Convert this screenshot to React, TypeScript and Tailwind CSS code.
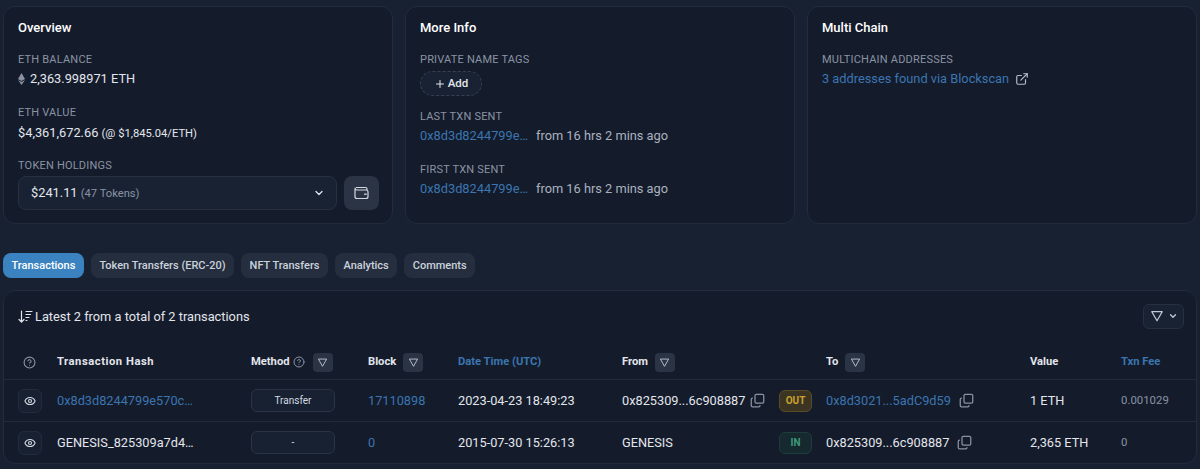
import { ChevronDown, Copy, ExternalLink, Eye, Plus, CircleHelp } from "lucide-react";

function Funnel({ size = 12 }: { size?: number }) {
  return (
    <svg width={size} height={size} viewBox="0 0 16 16" fill="none" stroke="currentColor" strokeWidth="1.3" strokeLinejoin="round">
      <path d="M2 3h12L8 13.5z" />
    </svg>
  );
}

function WalletIcon() {
  return (
    <svg width="15" height="14" viewBox="0 0 15 14" fill="none" stroke="currentColor" strokeWidth="1.2" strokeLinecap="round" strokeLinejoin="round">
      <path d="M2.500 1.500h9a1.500 1.500 0 0 1 1.500 1.500v1M1 3.500v7A2 2 0 0 0 3 12.500h9a2 2 0 0 0 2-2v-4.500a2 2 0 0 0-2-2H3a2 2 0 0 1-2-2" />
      <path d="M10.500 8.200h1.800" />
    </svg>
  );
}

function FilterButton() {
  return (
    <span className="flex h-[19px] w-5 items-center justify-center rounded-[4px] bg-[#2a3444] text-[#c3cad5]">
      <Funnel size={11} />
    </span>
  );
}

function Label({ children }: { children: string }) {
  return <div className="text-[11px] leading-[18px] tracking-[0.2px] text-[#8a93a3]">{children}</div>;
}

function Card({ title, children }: { title: string; children: React.ReactNode }) {
  return (
    <div className="h-[218px] w-[390px] rounded-xl border border-[#222c3c] bg-[#141b2b] px-[14px] pt-[11px]">
      <div className="text-[13px] font-medium leading-5 text-white">{title}</div>
      {children}
    </div>
  );
}

function CopyIcon() {
  return <Copy size={15} className="-scale-y-100 text-[#8a93a3]" />;
}

function Tab({ label, active }: { label: string; active?: boolean }) {
  return (
    <div
      className={
        active
          ? "flex h-[25px] items-center rounded-lg bg-[#3b82c0] px-[8.5px] pt-[1px] text-[11px] font-medium text-white"
          : "flex h-[25px] items-center rounded-lg bg-[#252e3e] px-[8.5px] pt-[1px] text-[11px] font-medium text-[#ccd2dc]"
      }
    >
      {label}
    </div>
  );
}

function TxnRow({
  hash,
  hashLink,
  method,
  block,
  date,
  from,
  fromCopy,
  dir,
  to,
  toLink,
  value,
  fee,
  last,
}: {
  hash: string;
  hashLink?: boolean;
  method: string;
  block: string;
  date: string;
  from: string;
  fromCopy?: boolean;
  dir: "OUT" | "IN";
  to: string;
  toLink?: boolean;
  value: string;
  fee: string;
  last?: boolean;
}) {
  return (
    <div className={last ? "flex h-[41px] items-center text-[12.75px]" : "flex h-[42px] items-center border-b border-[#222c3c] text-[12.75px]"}>
      <div className="w-[53px] pl-[14px]">
        <span className="flex h-6 w-6 items-center justify-center rounded-md border border-[#222c3c] bg-[#182132] text-[#d5dae2]">
          <Eye size={12} strokeWidth={2.2} />
        </span>
      </div>
      <div className={hashLink ? "w-[194px] text-[#3b76b0]" : "w-[194px] text-[#e3e6ec]"}>{hash}</div>
      <div className="w-[117px]">
        <span className="flex h-[23px] w-[84px] items-center justify-center rounded-md border border-[#2a3444] bg-[#182132] text-[10px] text-[#d5dae2]">
          {method}
        </span>
      </div>
      <div className="w-[90px] text-[#3b76b0]">{block}</div>
      <div className="w-[164px] text-[#e3e6ec]">{date}</div>
      <div className="flex w-[157px] items-center gap-[5px] text-[#e3e6ec]">
        {from}
        {fromCopy && <CopyIcon />}
      </div>
      <div className="w-[47px]">
        <span
          className={
            dir === "OUT"
              ? "flex h-[22px] w-[33px] items-center justify-center rounded-md border border-[#5a4c26] bg-[#3b3422] text-[10px] font-bold text-[#c9a22f]"
              : "flex h-[22px] w-[33px] items-center justify-center rounded-md border border-[#1f3c3c] bg-[#15292e] text-[10px] font-bold text-[#3f9a7d]"
          }
        >
          {dir}
        </span>
      </div>
      <div className={toLink ? "flex w-[204px] items-center gap-[8px] text-[#3b76b0]" : "flex w-[204px] items-center gap-[8px] text-[#e3e6ec]"}>
        {to}
        <CopyIcon />
      </div>
      <div className="w-[91px] text-[#e3e6ec]">{value}</div>
      <div className="text-[11.4px] text-[#8a93a3]">{fee}</div>
    </div>
  );
}

export default function App() {
  return (
    <div className="h-[469px] w-[1200px] overflow-hidden bg-[#172131] pt-[6px] font-['Roboto',sans-serif]">
      <div className="flex gap-3 px-[3px]">
        <Card title="Overview">
          <div className="mt-[13px]">
            <Label>ETH BALANCE</Label>
            <div className="flex items-center gap-[5px] text-[12.8px] leading-5 text-[#e3e6ec]">
              <svg width="7" height="12" viewBox="0 0 7 12" fill="#8a93a3">
                <path d="M3.500 0L7 6 3.500 8 0 6zM0 7l3.500 2L7 7l-3.500 5z" />
              </svg>
              2,363.998971 ETH
            </div>
          </div>
          <div className="mt-[15px]">
            <Label>ETH VALUE</Label>
            <div className="mt-[1px] text-[12.8px] leading-5 text-[#e3e6ec]">
              $4,361,672.66 <span className="text-[11.2px]">(@ $1,845.04/ETH)</span>
            </div>
          </div>
          <div className="mt-[13px]">
            <Label>TOKEN HOLDINGS</Label>
            <div className="mt-[1px] flex gap-[7px]">
              <div className="flex h-[34px] w-[319px] shrink-0 items-center justify-between rounded-lg border border-[#263041] bg-[#182233] pl-3 pr-[11px]">
                <span className="text-[12.8px] text-[#e3e6ec]">
                  $241.11 <span className="text-[11.2px] text-[#8a93a3]">(47 Tokens)</span>
                </span>
                <ChevronDown size={12} strokeWidth={2.5} className="text-[#e3e6ec]" />
              </div>
              <div className="flex h-[34px] w-[35px] shrink-0 items-center justify-center rounded-lg bg-[#2a3444] text-[#d5dae2]">
                <WalletIcon />
              </div>
            </div>
          </div>
        </Card>
        <Card title="More Info">
          <div className="mt-[13px]">
            <Label>PRIVATE NAME TAGS</Label>
            <div className="mt-[2px] flex h-[25px] w-[62px] items-center justify-center gap-[2px] rounded-full border border-dashed border-[#344054] bg-[#182233] text-[11.5px] font-medium text-[#e3e6ec]">
              <Plus size={12} />
              Add
            </div>
          </div>
          <div className="mt-[12px]">
            <Label>LAST TXN SENT</Label>
            <div className="flex text-[12.8px] leading-5">
              <span className="w-[116px] text-[#3b76b0]">0x8d3d8244799e…</span>
              <span className="text-[#aab2bf]">from 16 hrs 2 mins ago</span>
            </div>
          </div>
          <div className="mt-[15px]">
            <Label>FIRST TXN SENT</Label>
            <div className="flex text-[12.8px] leading-5">
              <span className="w-[116px] text-[#3b76b0]">0x8d3d8244799e…</span>
              <span className="text-[#aab2bf]">from 16 hrs 2 mins ago</span>
            </div>
          </div>
        </Card>
        <Card title="Multi Chain">
          <div className="mt-[13px]">
            <Label>MULTICHAIN ADDRESSES</Label>
            <div className="flex items-center gap-[6px] text-[12.8px] leading-5 text-[#3b76b0]">
              3 addresses found via Blockscan
              <ExternalLink size={14} className="text-[#b4bbc7]" />
            </div>
          </div>
        </Card>
      </div>

      <div className="mt-[29px] flex gap-[7px] pl-[3px]">
        <Tab label="Transactions" active />
        <Tab label="Token Transfers (ERC-20)" />
        <Tab label="NFT Transfers" />
        <Tab label="Analytics" />
        <Tab label="Comments" />
      </div>

      <div className="ml-[3px] mt-[12px] h-[174px] w-[1194px] rounded-xl border border-[#222c3c] bg-[#141b2b]">
        <div className="flex h-[50px] items-center justify-between pl-[14px] pr-[12px]">
          <div className="flex items-center gap-[2px] pt-[1px] text-[12.8px] text-[#e3e6ec]">
            <svg width="15" height="13" viewBox="0 0 15 13" fill="none" stroke="currentColor" strokeWidth="1.2" strokeLinecap="round" strokeLinejoin="round">
              <path d="M3.500 1v11M1 9.500L3.500 12 6 9.500M8 1.500h6M8 4.500h4.500M8 7.500h3M8 10.500h1" />
            </svg>
            Latest 2 from a total of 2 transactions
          </div>
          <div className="flex h-[25px] w-[41px] items-center justify-center gap-[4px] rounded-md border border-[#263041] bg-[#182233] text-[#c3cad5]">
            <Funnel size={14} />
            <ChevronDown size={10} strokeWidth={3} />
          </div>
        </div>
        <div className="flex h-[39px] items-center border-b border-[#222c3c] pt-[4px] text-[11.2px] font-bold text-[#e3e6ec]">
          <div className="w-[53px] pl-[19px] text-[#8a93a3]">
            <CircleHelp size={13} />
          </div>
          <div className="w-[194px] tracking-[0.55px]">Transaction Hash</div>
          <div className="flex w-[117px] items-center gap-[3px]">
            Method
            <CircleHelp size={12} className="text-[#8a93a3]" />
            <span className="ml-[5px]">
              <FilterButton />
            </span>
          </div>
          <div className="flex w-[90px] items-center gap-[7px]">
            Block
            <FilterButton />
          </div>
          <div className="w-[164px] text-[#3b76b0]">Date Time (UTC)</div>
          <div className="flex w-[204px] items-center gap-[7px]">
            From
            <FilterButton />
          </div>
          <div className="flex w-[204px] items-center gap-[7px]">
            To
            <FilterButton />
          </div>
          <div className="w-[91px]">Value</div>
          <div className="text-[#3b76b0]">Txn Fee</div>
        </div>
        <TxnRow
          hash="0x8d3d8244799e570c…"
          hashLink
          method="Transfer"
          block="17110898"
          date="2023-04-23 18:49:23"
          from="0x825309...6c908887"
          fromCopy
          dir="OUT"
          to="0x8d3021...5adC9d59"
          toLink
          value="1 ETH"
          fee="0.001029"
        />
        <TxnRow
          hash="GENESIS_825309a7d4…"
          method="-"
          block="0"
          date="2015-07-30 15:26:13"
          from="GENESIS"
          dir="IN"
          to="0x825309...6c908887"
          value="2,365 ETH"
          fee="0"
          last
        />
      </div>
    </div>
  );
}
